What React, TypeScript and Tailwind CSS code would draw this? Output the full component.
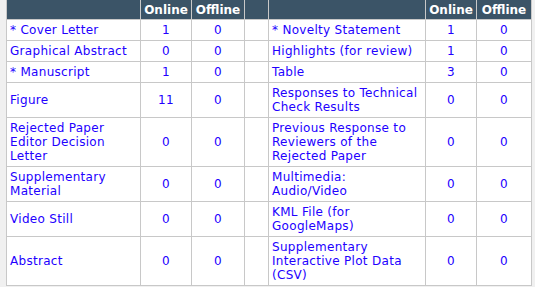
type Row = { name: string; online: number; offline: number };

const left: Row[] = [
  { name: "* Cover Letter", online: 1, offline: 0 },
  { name: "Graphical Abstract", online: 0, offline: 0 },
  { name: "* Manuscript", online: 1, offline: 0 },
  { name: "Figure", online: 11, offline: 0 },
  { name: "Rejected Paper Editor Decision Letter", online: 0, offline: 0 },
  { name: "Supplementary Material", online: 0, offline: 0 },
  { name: "Video Still", online: 0, offline: 0 },
  { name: "Abstract", online: 0, offline: 0 },
];

const right: Row[] = [
  { name: "* Novelty Statement", online: 1, offline: 0 },
  { name: "Highlights (for review)", online: 1, offline: 0 },
  { name: "Table", online: 3, offline: 0 },
  { name: "Responses to Technical Check Results", online: 0, offline: 0 },
  { name: "Previous Response to Reviewers of the Rejected Paper", online: 0, offline: 0 },
  { name: "Multimedia: Audio/Video", online: 0, offline: 0 },
  { name: "KML File (for GoogleMaps)", online: 0, offline: 0 },
  { name: "Supplementary Interactive Plot Data (CSV)", online: 0, offline: 0 },
];

const th = "border-x border-b border-[#c8c8c8] bg-[#3b5467] px-[3px] pt-[3px] pb-[2px] text-center font-bold text-white";
const td = "border border-[#c8c8c8] bg-white px-[3px] py-[3px] align-middle tracking-[0.3px]";
const link = "text-[#2200ff]";

export default function App() {
  return (
    <div
      className="min-h-screen bg-[#f0f0f0] pl-[6px] text-[12px] leading-[14px]"
      style={{ fontFamily: '"DejaVu Sans", Verdana, sans-serif' }}
    >
      <table className="w-[525px] table-fixed border-collapse">
        <colgroup>
          <col className="w-[134px]" />
          <col className="w-[51px]" />
          <col className="w-[53px]" />
          <col className="w-[24px]" />
          <col className="w-[157px]" />
          <col className="w-[51px]" />
          <col className="w-[55px]" />
        </colgroup>
        <thead>
          <tr>
            <th className={th}></th>
            <th className={th}>Online</th>
            <th className={th}>Offline</th>
            <th className={th}></th>
            <th className={th}></th>
            <th className={th}>Online</th>
            <th className={th}>Offline</th>
          </tr>
        </thead>
        <tbody>
          {left.map((l, i) => {
            const r = right[i];
            return (
              <tr key={l.name}>
                <td className={`${td} ${link}`}>{l.name}</td>
                <td className={`${td} ${link} text-center`}>{l.online}</td>
                <td className={`${td} ${link} text-center`}>{l.offline}</td>
                <td className={td}></td>
                <td className={`${td} ${link}`}>{r.name}</td>
                <td className={`${td} ${link} text-center`}>{r.online}</td>
                <td className={`${td} ${link} text-center`}>{r.offline}</td>
              </tr>
            );
          })}
        </tbody>
      </table>
    </div>
  );
}
